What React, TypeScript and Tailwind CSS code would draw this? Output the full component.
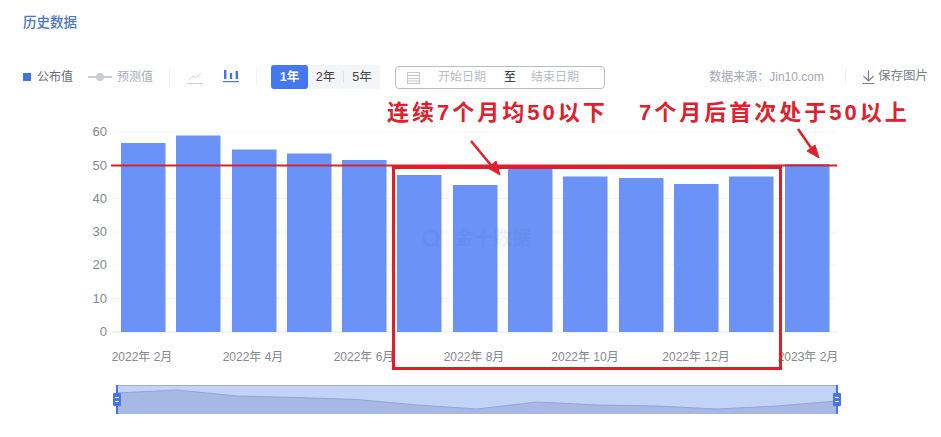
import React from 'react';

const bars = [143, 135.5, 149.5, 153.5, 160, 175, 185, 168, 176.5, 178, 184, 176.5, 164];
const barX = [121, 176, 232, 287, 342, 397, 453, 508, 563, 619, 674, 729, 785];
const ticks = [
  { label: '60', y: 132 },
  { label: '50', y: 165.5 },
  { label: '40', y: 198.5 },
  { label: '30', y: 232 },
  { label: '20', y: 265 },
  { label: '10', y: 298.5 },
  { label: '0', y: 332 },
];
const months = [
  { label: '2022年 2月', x: 142 },
  { label: '2022年 4月', x: 253 },
  { label: '2022年 6月', x: 364 },
  { label: '2022年 8月', x: 474 },
  { label: '2022年 10月', x: 585 },
  { label: '2022年 12月', x: 696 },
  { label: '2023年 2月', x: 808 },
];
const slider = [393, 390, 396, 397.5, 399.5, 405, 409, 402, 405, 406, 409, 406, 401];
const sliderPts = slider.map((y, i) => `${117 + i * 60},${y}`).join(' ');

const Divider = () => <div className="h-[18px] w-px bg-[#f0f1f4]" />;

const SliderHandle = ({ x }: { x: number }) => (
  <g>
    <line x1={x} x2={x} y1="385" y2="414" stroke="#4a74ea" strokeWidth="2" />
    <rect x={x - 4} y="393" width="8" height="13" rx="1" fill="#4a74ea" />
    <line x1={x - 2} x2={x + 2} y1="397.5" y2="397.5" stroke="#fff" />
    <line x1={x - 2} x2={x + 2} y1="401.5" y2="401.5" stroke="#fff" />
  </g>
);

export default function App() {
  return (
    <div className="h-[437px] w-[941px] overflow-hidden bg-white [font-family:'Liberation_Sans','Noto_Sans_CJK_SC',sans-serif]">
      <div className="flex h-[65px] items-start pl-[23px] pt-[15px]">
        <h2 className="text-[13.5px] leading-4 font-medium text-[#4a72d8]">历史数据</h2>
      </div>

      {/* Toolbar */}
      <div className="flex h-6 items-center pl-[23px] pr-[13px] text-[12px]">
        <span className="h-2 w-2 bg-[#4672e8]" />
        <span className="ml-[6px] text-[#666a73]">公布值</span>
        <svg className="ml-[15px]" width="24" height="10" viewBox="0 0 24 10">
          <line x1="0" x2="24" y1="5" y2="5" stroke="#c9ccd2" strokeWidth="2" />
          <circle cx="12" cy="5" r="4" fill="#c9ccd2" />
        </svg>
        <span className="ml-[5px] text-[#a9adb5]">预测值</span>
        <div className="ml-[16px]">
          <Divider />
        </div>
        <svg className="ml-[17px]" width="16" height="14" viewBox="0 0 16 14" fill="none" stroke="#cfd2d8">
          <path d="M0 13.5h16" />
          <path d="M1.5 10.5 6 6l2.5 2L14.5 3" />
        </svg>
        <svg className="ml-[20px] -translate-y-[1px]" width="16" height="14" viewBox="0 0 16 14" fill="#4a72d8">
          <rect x="1" y="1" width="2.4" height="9" />
          <rect x="6.8" y="4" width="2.4" height="6" />
          <rect x="12.6" y="2" width="2.4" height="8" />
          <rect x="0" y="12" width="16" height="1.2" />
        </svg>
        <div className="ml-[17px]">
          <Divider />
        </div>
        <div className="ml-[14px] flex h-6 w-[109px] items-center rounded-[3px] bg-[#f3f5f9] text-[12.5px] text-[#444]">
          <span className="flex h-6 w-[37px] items-center justify-center rounded-[3px] bg-[#4477f0] font-bold text-white">1年</span>
          <span className="flex w-[35px] justify-center">2年</span>
          <span className="h-3 w-px bg-[#dde0e6]" />
          <span className="flex w-9 justify-center">5年</span>
        </div>
        <div className="ml-[15px] flex h-[23px] w-[210px] items-center rounded-[4px] border border-[#b9bcc2] pl-[11px] text-[12px]">
          <svg width="13" height="13" viewBox="0 0 13 13" fill="none" stroke="#c4c7cd">
            <rect x="0.5" y="1.5" width="12" height="11" />
            <path d="M0.5 4.5h12M0.5 7.5h12M0.5 10h12" />
          </svg>
          <span className="ml-[18px] text-[#b9bcc4]">开始日期</span>
          <span className="ml-[18px] text-[#222]">至</span>
          <span className="ml-[15px] text-[#b9bcc4]">结束日期</span>
        </div>
        <span className="ml-auto text-[#a3a7b0]">数据来源：Jin10.com</span>
        <div className="ml-[21px]">
          <Divider />
        </div>
        <svg className="ml-[16px]" width="13" height="14" viewBox="0 0 13 14" fill="none" stroke="#7c8089" strokeWidth="1.1">
          <path d="M6.5 0.5v10M1.5 6l5 5 5-5M0.5 13.5h12" />
        </svg>
        <span className="ml-[3px] -translate-y-[1px] text-[12.5px] text-[#7c8089]">保存图片</span>
      </div>

      {/* Chart */}
      <div className="relative h-[348px]">
        <svg className="block" width="941" height="348" viewBox="0 89 941 348">
          {ticks.map((t) => (
            <g key={t.label}>
              <line x1="113" x2="837" y1={t.y} y2={t.y} stroke={t.label === '0' ? '#e4e6ea' : '#f3f4f6'} />
              <text x="107" y={t.y + 4} textAnchor="end" fontSize="13" fill="#85888f">{t.label}</text>
            </g>
          ))}
          {bars.map((top, i) => (
            <rect key={barX[i]} x={barX[i]} y={top} width="44.5" height={332 - top} fill="#6b92f6" />
          ))}
          {/* watermark */}
          <g opacity="0.07" fill="#2b4f9e">
            <circle cx="431" cy="238" r="7.5" fill="none" stroke="#2b4f9e" strokeWidth="3" />
            <path d="M434 241l5 6" stroke="#2b4f9e" strokeWidth="3" />
            <text x="455" y="245" fontSize="19" fontWeight="700">金十数据</text>
          </g>
          {months.map((m) => (
            <text key={m.label} x={m.x} y="361" textAnchor="middle" fontSize="12" fill="#85888f">{m.label}</text>
          ))}

          {/* data zoom */}
          <rect x="117" y="385" width="720" height="29" fill="#c3d3f8" />
          <line x1="117" x2="837" y1="385.5" y2="385.5" stroke="#a3aec6" />
          <polygon points={`117,414 ${sliderPts} 837,414`} fill="#a7b8e4" />
          <polyline points={sliderPts} fill="none" stroke="#93a5d6" />
          <SliderHandle x={117} />
          <SliderHandle x={837} />

          {/* hand-drawn notes */}
          <line x1="111" x2="837" y1="165.5" y2="165.5" stroke="#d9222e" strokeWidth="2" />
          <g fill="#e0202c" stroke="#e0202c">
            <line x1="471" y1="141" x2="495" y2="170" strokeWidth="2.5" />
            <polygon points="500,175 488,168 496,161" />
            <line x1="798" y1="129" x2="814" y2="152" strokeWidth="2.5" />
            <polygon points="819,158 807,151 815,145" />
          </g>
        </svg>

        <div className="absolute left-[392px] top-[77px] h-[204px] w-[390px] border-[3px] border-[#dc1f2b]" />
        <span className="absolute left-[387px] top-[9px] text-[22px] leading-[30px] font-bold tracking-[3px] text-[#e0202c]">连续7个月均50以下</span>
        <span className="absolute left-[639px] top-[9px] text-[22px] leading-[30px] font-bold tracking-[3px] text-[#e0202c]">7个月后首次处于50以上</span>
      </div>
    </div>
  );
}
